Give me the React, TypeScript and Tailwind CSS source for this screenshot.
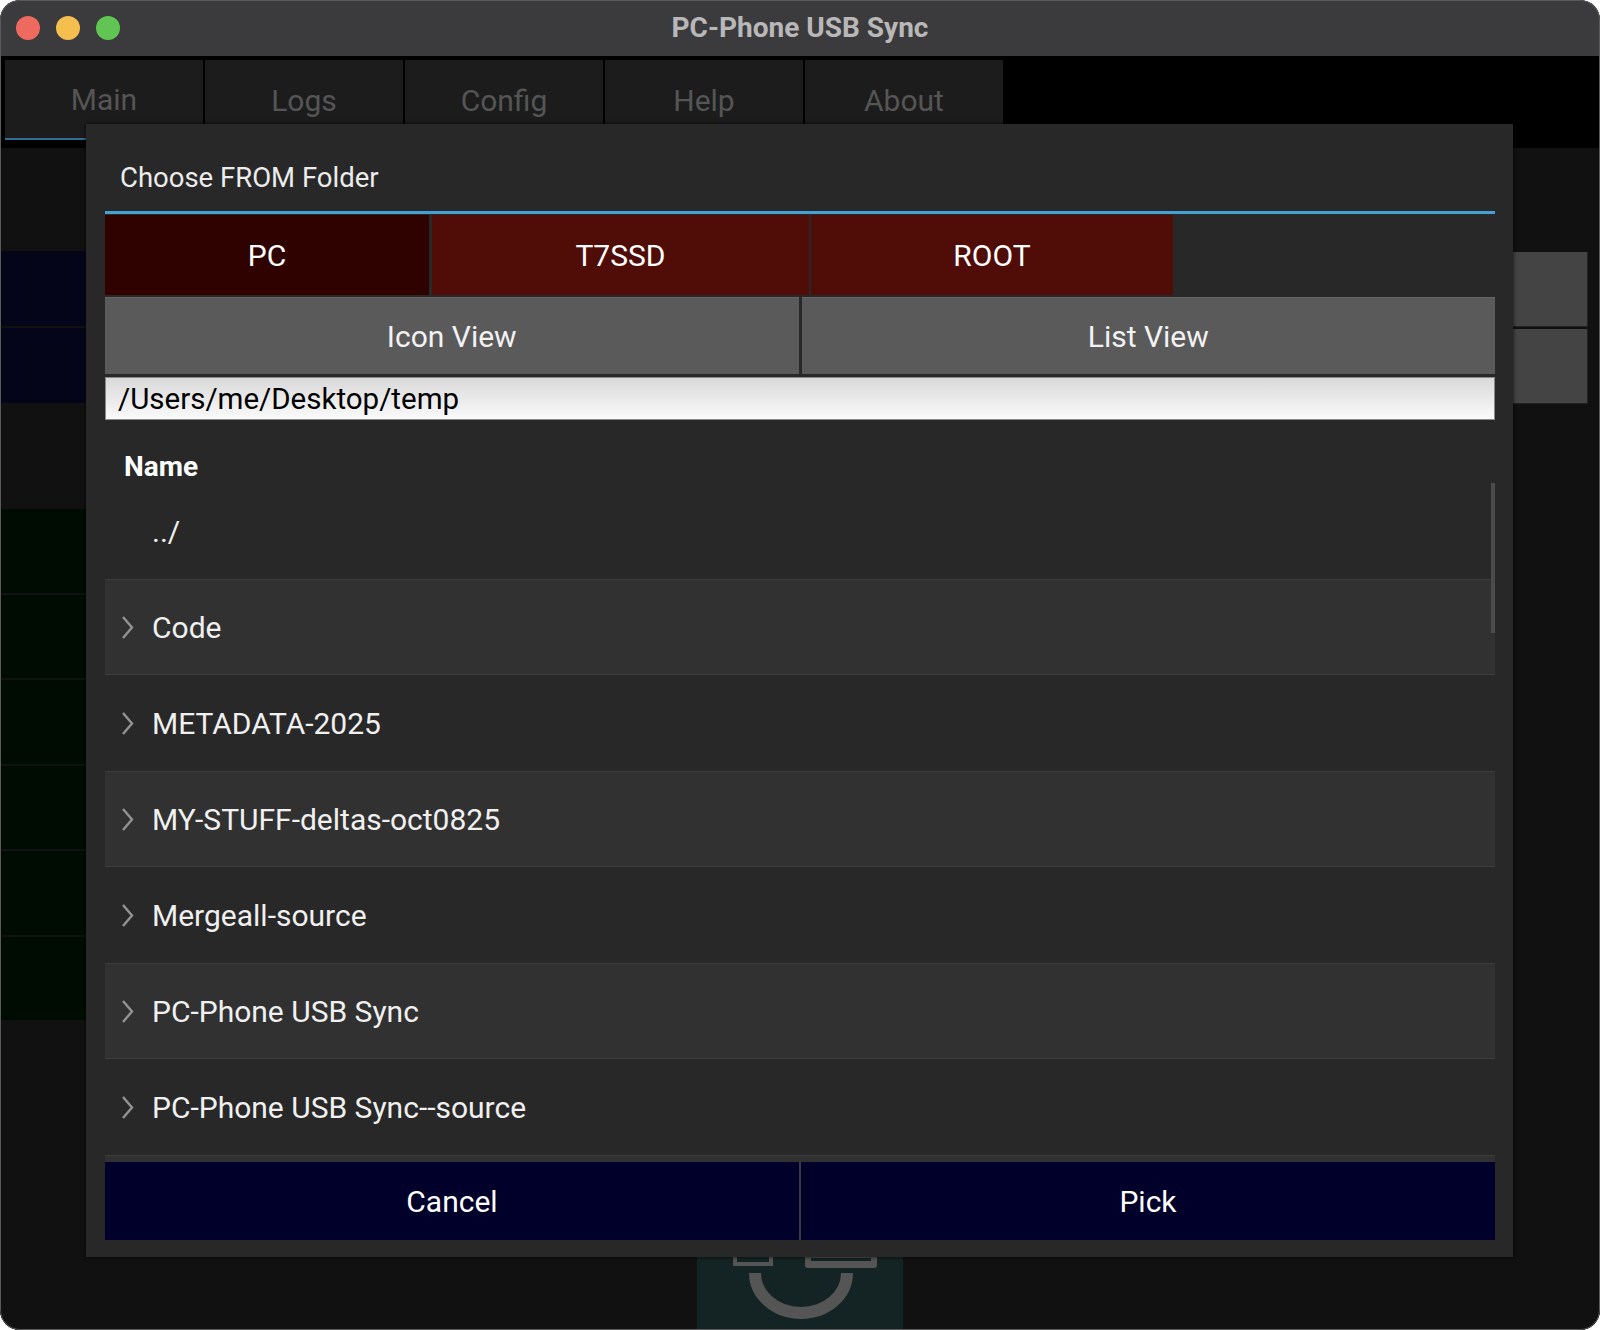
import React from 'react';

const folders = [
    'Code',
    'METADATA-2025',
    'MY-STUFF-deltas-oct0825',
    'Mergeall-source',
    'PC-Phone USB Sync',
    'PC-Phone USB Sync--source',
];

const tabs = ['Main', 'Logs', 'Config', 'Help', 'About'];

const Chevron: React.FC = () => (
    <svg width="13" height="25" viewBox="0 0 13 25" className="shrink-0">
        <polyline points="2,2 11,12.5 2,23" fill="none" stroke="#939393" strokeWidth="2.4" />
    </svg>
);

const TitleBar: React.FC = () => (
    <div className="h-[56px] shrink-0 bg-[#3b3b3d] grid grid-cols-[1fr_auto_1fr] items-center">
        <div className="flex items-center gap-[16px] pl-[16px]">
            <div className="w-[24px] h-[24px] rounded-full bg-[#ee6a5f]" />
            <div className="w-[24px] h-[24px] rounded-full bg-[#f5be4f]" />
            <div className="w-[24px] h-[24px] rounded-full bg-[#61c554]" />
        </div>
        <div className="text-[28px] font-bold text-[#b8b8b8]">PC-Phone USB Sync</div>
        <div />
    </div>
);

const TabBar: React.FC = () => (
    <div className="h-[92px] shrink-0 bg-black pt-[4px] px-[5px] flex items-start gap-[2px]">
        {tabs.map((t, i) => (
            <div
                key={t}
                className={
                    i === 0
                        ? 'w-[198px] h-[80px] bg-[#1c1c1c] border-b-2 border-[#2f6f97] flex items-center justify-center text-[30px] text-[#555555]'
                        : 'w-[198px] h-[80px] bg-[#1c1c1c] flex items-center justify-center text-[30px] text-[#555555]'
                }
            >
                {t}
            </div>
        ))}
    </div>
);

// the main screen sitting behind the modal
const Backdrop: React.FC = () => (
    <div className="flex-1 bg-[#111111] flex flex-col">
        <div className="flex-1 flex justify-between">
            <div className="w-[300px] pl-[1px] pt-[103px] flex flex-col">
                <div className="flex flex-col gap-[2px]">
                    <div className="h-[75px] bg-[#05051a]" />
                    <div className="h-[75px] bg-[#05051a]" />
                </div>
                <div className="mt-[106px] flex flex-col gap-[2px]">
                    {[0, 1, 2, 3, 4, 5].map((n) => (
                        <div key={n} className="h-[83.5px] bg-[#000c02]" />
                    ))}
                </div>
            </div>
            <div className="w-[300px] pr-[12px] pt-[104px] flex flex-col items-end gap-[2px]">
                <div className="w-[300px] h-[75px] bg-[#444444] border-r border-b border-[#222]" />
                <div className="w-[300px] h-[75px] bg-[#444444] border-r border-b border-[#222]" />
            </div>
        </div>
        <div className="h-[150px] flex justify-center">
            <div className="w-[206px] h-full bg-[#142424]">
                <svg width="206" height="150" viewBox="0 0 206 150">
                    <rect x="38" y="55" width="36" height="29" fill="none" stroke="#555" strokeWidth="4" />
                    <rect x="108" y="55" width="72" height="33" rx="3" fill="#555" />
                    <rect x="114" y="78" width="60" height="3" fill="#142424" />
                    <path d="M 58 93 A 46 40 0 0 0 150 93" fill="none" stroke="#555" strokeWidth="12" />
                </svg>
            </div>
        </div>
    </div>
);

const FolderDialog: React.FC = () => (
    <div className="absolute left-[86px] top-[68px] w-[1427px] h-[1133px] bg-[#282828] shadow-[0_0_4px_rgba(0,0,0,0.8)] pl-[19px] pr-[18px] flex flex-col">
        <div className="h-[87px] pt-[21px] pl-[15px] flex items-center text-[27.5px] text-[#ececec]">Choose FROM Folder</div>
        <div className="h-[3px] bg-[#45a0d3]" />
        <div className="mt-[1px] h-[80px] flex text-[30px] text-white">
            <div className="w-[324px] bg-[#2f0200] flex items-center justify-center">PC</div>
            <div className="ml-[3px] w-[377px] bg-[#500c06] flex items-center justify-center">T7SSD</div>
            <div className="ml-[2px] w-[362px] bg-[#500c06] flex items-center justify-center">ROOT</div>
        </div>
        <div className="mt-[2px] h-[77px] flex gap-[3px] text-[30px] text-[#f2f2f2]">
            <div className="flex-1 bg-[#5a5a5a] border-t border-[#666] flex items-center justify-center">Icon View</div>
            <div className="flex-1 bg-[#5a5a5a] border-t border-[#666] flex items-center justify-center">List View</div>
        </div>
        <div className="mt-[3px] h-[43px] border border-[#8a8a8a] bg-linear-to-b from-[#d9d9d9] to-[#fafafa] pl-[12px] pt-[3px] flex items-center text-[29.5px] text-black leading-none">
            /Users/me/Desktop/temp
        </div>
        <div className="h-[63px] pl-[19px] pt-[33px] text-[28px] font-bold text-white leading-none">Name</div>
        <div className="relative h-[679px] overflow-hidden flex flex-col">
            <div className="h-[96px] shrink-0 pl-[16px] flex items-center text-[30px] text-[#f0f0f0]">
                <div className="w-[13px]" />
                <span className="ml-[18px]">../</span>
            </div>
            {folders.map((f, i) => (
                <div
                    key={f}
                    className={
                        i % 2 === 0
                            ? 'h-[96px] shrink-0 pl-[16px] flex items-center text-[30px] text-[#f0f0f0] bg-[#313131] border-y border-[#3c3c3c]'
                            : 'h-[96px] shrink-0 pl-[16px] flex items-center text-[30px] text-[#f0f0f0]'
                    }
                >
                    <Chevron />
                    <span className="ml-[18px]">{f}</span>
                </div>
            ))}
            {/* next row, scrolled out of view */}
            <div className="h-[96px] shrink-0 bg-[#313131] border-t border-[#3c3c3c]" />
            <div className="absolute right-0 top-0 w-[4px] h-[150px] bg-[#4b4b4b]" />
        </div>
        <div className="h-[78px] flex gap-[2px] bg-[#3a3a3a] text-[30px] text-white">
            <div className="flex-1 bg-[#00002a] flex items-center justify-center">Cancel</div>
            <div className="flex-1 bg-[#00002a] flex items-center justify-center">Pick</div>
        </div>
    </div>
);

export default function App() {
    return (
        <div className="w-[1600px] h-[1330px] bg-white font-['Roboto','Liberation_Sans',sans-serif]">
            <div className="relative w-full h-full rounded-[20px] overflow-hidden bg-[#111111] flex flex-col">
                <TitleBar />
                <div className="relative flex-1 flex flex-col">
                    <TabBar />
                    <Backdrop />
                    <FolderDialog />
                </div>
                <div className="absolute inset-0 rounded-[20px] border border-[#5a5a5a] pointer-events-none" />
            </div>
        </div>
    );
}
